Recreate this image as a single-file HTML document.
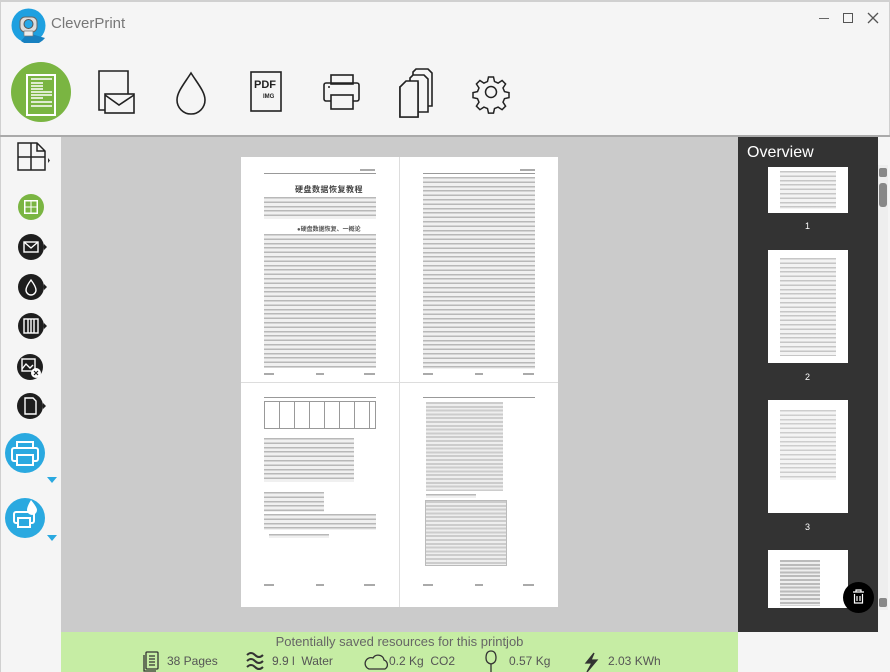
<!DOCTYPE html>
<html><head><meta charset="utf-8"><style>
*{margin:0;padding:0;box-sizing:border-box}
body{width:890px;height:672px;overflow:hidden;background:#f5f5f5;font-family:"Liberation Sans","Noto Sans CJK SC",sans-serif;position:relative}
.a{position:absolute}
.tx{position:absolute;background:repeating-linear-gradient(to bottom,#b8b8b8 0 1.5px,#f0f0f0 1.5px 4.4px)}
.hl{position:absolute;height:1px;background:#999}
.ft{position:absolute;height:2px;background:#aaa}
</style></head><body>
<div class="a" style="left:0;top:0;width:890px;height:2px;background:#d0d0d0"></div>
<div class="a" style="left:0;top:0;width:1px;height:672px;background:#d0d0d0"></div>
<div class="a" style="left:889px;top:0;width:1px;height:136px;background:#d0d0d0"></div>
<svg class="a" style="left:11px;top:8px" width="35" height="35" viewBox="0 0 35 35">
<circle cx="17.5" cy="17.5" r="17" fill="#1ea0e0"/>
<path d="M17 25 L34 30 A17 17 0 0 1 10 33Z" fill="#1780c0"/>
<rect x="9" y="9" width="17" height="15" rx="5" fill="#ddd" stroke="#666"/>
<circle cx="17.5" cy="16" r="4.5" fill="#27a8e8" stroke="#555"/>
<rect x="13" y="23" width="9" height="5" fill="#eee" stroke="#777" stroke-width=".7"/>
</svg>
<div class="a" style="left:51px;top:15px;font-size:15px;color:#777">CleverPrint</div>
<div class="a" style="left:819px;top:18px;width:10px;height:1px;background:#666"></div>
<div class="a" style="left:843px;top:13px;width:10px;height:10px;border:1.3px solid #555"></div>
<svg class="a" style="left:867px;top:12px" width="12" height="12"><path d="M1 1L11 11M11 1L1 11" stroke="#555" stroke-width="1.3"/></svg>
<svg class="a" style="left:0;top:55px" width="530" height="75" viewBox="0 55 530 75">
<circle cx="41" cy="92" r="30" fill="#7ab542"/>
<rect x="27" y="75" width="28" height="40" fill="none" stroke="#fff" stroke-width="2"/>
<g stroke="#fff" stroke-width="1.6"><path d="M31 79H52M31 83H43M31 86H43M31 89H43M31 92H52M31 95H52M31 98H43M31 102H52M31 106H52"/></g>
<g fill="none" stroke="#222" stroke-width="1.6">
<path d="M128 94V71H99V110H105"/><rect x="105" y="94" width="29" height="19"/><path d="M105 95L119 105L134 95"/>
<path d="M191 73C184 84 177 92 177 100A14 14 0 0 0 205 100C205 92 198 84 191 73Z"/>
<rect x="251" y="72" width="30" height="39"/>
<rect x="331" y="75" width="22" height="9"/><rect x="324" y="83" width="35" height="18" rx="2"/><rect x="331" y="95" width="22" height="14" fill="#f5f5f5"/>
<path d="M400 87H406L410 83H418V117H400Z" fill="#f5f5f5"/>
<path d="M410 83V78L413 75H424L428 79V112H418"/><path d="M413 75V72L416 69H428L432 73V106H428"/>
<path d="M400 87L406 81H418V117H400Z" fill="#f5f5f5"/>
</g>
<text x="254" y="88" font-family="Liberation Sans" font-weight="bold" font-size="11" fill="#222">PDF</text>
<text x="263" y="98" font-family="Liberation Sans" font-weight="bold" font-size="6" fill="#222">IMG</text>
<circle cx="329" cy="87" r="1" fill="#222"/>
<g transform="translate(491,92)" fill="none" stroke="#222" stroke-width="1.5">
<path d="M-2.5-15h5l1 4.5 3.6 1.6 4-2.6 3.5 3.5-2.6 4 1.5 3.6 4.5 1v5l-4.5 1-1.5 3.6 2.6 4-3.5 3.5-4-2.6-3.6 1.5-1 4.5h-5l-1-4.5-3.6-1.5-4 2.6-3.5-3.5 2.6-4-1.5-3.6-4.5-1v-5l4.5-1 1.5-3.6-2.6-4 3.5-3.5 4 2.6 3.6-1.6z"/>
<circle r="5.5"/></g>
</svg>
<div class="a" style="left:0;top:135px;width:890px;height:2px;background:#aaa"></div>
<div class="a" style="left:61px;top:137px;width:677px;height:495px;background:#cbcbcb"></div>
<svg class="a" style="left:0;top:137px" width="61" height="420" viewBox="0 137 61 420">
<path d="M18 143H37L45 151V170H18Z M37 143V151H45 M18 157H45 M31 143V170" fill="none" stroke="#222" stroke-width="1.5"/>
<path d="M48 158L50 160.5L48 163Z" fill="#333"/>
<circle cx="31" cy="207" r="13" fill="#7ab542"/>
<rect x="24" y="200" width="14" height="14" fill="#fff"/>
<g fill="#7ab542"><rect x="25.5" y="201.5" width="5" height="5"/><rect x="31.5" y="201.5" width="5" height="5"/><rect x="25.5" y="207.5" width="5" height="5"/><rect x="31.5" y="207.5" width="5" height="5"/></g>
<g fill="#1e1e1e"><circle cx="31" cy="247" r="13"/><circle cx="31" cy="287" r="13"/><circle cx="31" cy="326" r="13"/><circle cx="30" cy="367" r="13"/><circle cx="30" cy="406" r="13"/>
<path d="M44 244L47 247L44 250Z M44 284L47 287L44 290Z M44 323L47 326L44 329Z M43 403L46 406L43 409Z"/></g>
<g fill="none" stroke="#fff" stroke-width="1.4">
<rect x="24" y="242" width="14" height="10"/><path d="M24 242L31 248L38 242"/>
<path d="M31 280C28 284 26 287 26 290A5 5 0 0 0 36 290C36 287 34 284 31 280Z"/>
<rect x="24" y="319" width="14" height="14"/><path d="M28 319V333M31 319V333M34 319V333"/>
<rect x="22" y="359" width="13" height="12"/><path d="M22 369L26 364L30 368L33 365"/>
<path d="M25 398H33L36 401V414H25Z"/></g>
<circle cx="36" cy="373" r="5" fill="#fff"/><path d="M34 371L38 375M38 371L34 375" stroke="#1e1e1e" stroke-width="1.2"/>
<circle cx="25" cy="453" r="20" fill="#2aa9e0"/>
<circle cx="25" cy="518" r="20" fill="#2aa9e0"/>
<g fill="none" stroke="#fff" stroke-width="2"><rect x="17" y="442" width="16" height="6"/><rect x="12" y="448" width="26" height="13" rx="2"/><rect x="17" y="455" width="16" height="10" fill="#2aa9e0"/>
<rect x="14" y="512" width="20" height="11" rx="2"/><rect x="18" y="518" width="12" height="9" fill="#2aa9e0"/></g>
<path d="M31 500C28 505 27 508 27 510A5 5 0 0 0 37 510C37 508 35 505 31 500Z" fill="#fff"/>
<path d="M47 477H57L52 483Z M47 535H57L52 541Z" fill="#2aa9e0"/>
</svg>
<div class="a" style="left:241px;top:157px;width:317px;height:450px;background:#fff"></div>
<div class="a" style="left:399px;top:157px;width:1px;height:450px;background:#ddd"></div>
<div class="a" style="left:241px;top:382px;width:317px;height:1px;background:#ddd"></div>
<div class="hl" style="left:264px;top:173px;width:112px"></div>
<div class="ft" style="left:360px;top:169px;width:15px"></div>
<div class="a" style="left:295px;top:184px;font-size:8px;font-weight:bold;color:#444;letter-spacing:.5px">硬盘数据恢复教程</div>
<div class="tx" style="left:264px;top:197px;width:112px;height:22px"></div>
<div class="a" style="left:297px;top:224px;font-size:6px;font-weight:bold;color:#555">●硬盘数据恢复、一概论</div>
<div class="tx" style="left:264px;top:234px;width:112px;height:134px"></div>
<div class="ft" style="left:264px;top:373px;width:10px"></div><div class="ft" style="left:316px;top:373px;width:8px"></div><div class="ft" style="left:364px;top:373px;width:11px"></div>
<div class="hl" style="left:423px;top:173px;width:112px"></div>
<div class="ft" style="left:520px;top:169px;width:15px"></div>
<div class="tx" style="left:423px;top:177px;width:112px;height:192px"></div>
<div class="ft" style="left:423px;top:373px;width:10px"></div><div class="ft" style="left:475px;top:373px;width:8px"></div><div class="ft" style="left:523px;top:373px;width:11px"></div>
<div class="hl" style="left:264px;top:397px;width:112px"></div>
<div class="a" style="left:264px;top:401px;width:112px;height:28px;border:1px solid #999;background:repeating-linear-gradient(to right,transparent 0 14px,#999 14px 15px)"></div>
<div class="tx" style="left:264px;top:438px;width:90px;height:44px"></div>
<div class="tx" style="left:264px;top:492px;width:60px;height:20px"></div>
<div class="tx" style="left:264px;top:514px;width:112px;height:16px"></div>
<div class="tx" style="left:269px;top:534px;width:60px;height:4px"></div>
<div class="ft" style="left:264px;top:584px;width:10px"></div><div class="ft" style="left:316px;top:584px;width:8px"></div><div class="ft" style="left:364px;top:584px;width:11px"></div>
<div class="hl" style="left:423px;top:397px;width:112px"></div>
<div class="a" style="left:426px;top:402px;width:77px;height:89px;background:repeating-linear-gradient(to bottom,#ccc 0 2px,#eee 2px 3.8px)"></div>
<div class="tx" style="left:426px;top:494px;width:50px;height:4px"></div>
<div class="a" style="left:425px;top:500px;width:82px;height:66px;border:1px solid #bbb;background:repeating-linear-gradient(to bottom,#ccc 0 2px,#eee 2px 3.8px)"></div>
<div class="ft" style="left:423px;top:584px;width:10px"></div><div class="ft" style="left:475px;top:584px;width:8px"></div><div class="ft" style="left:523px;top:584px;width:11px"></div>
<div class="a" style="left:738px;top:137px;width:140px;height:495px;background:#333"></div>
<div class="a" style="left:747px;top:144px;font-size:16px;color:#fff">Overview</div>
<div class="a" style="left:768px;top:167px;width:80px;height:46px;background:#fff"><div class="tx" style="left:12px;top:4px;width:56px;height:38px;opacity:.8"></div></div>
<div class="a" style="left:805px;top:221px;font-size:9px;color:#fff">1</div>
<div class="a" style="left:768px;top:250px;width:80px;height:113px;background:#fff"><div class="tx" style="left:12px;top:8px;width:56px;height:98px;opacity:.8"></div></div>
<div class="a" style="left:805px;top:372px;font-size:9px;color:#fff">2</div>
<div class="a" style="left:768px;top:400px;width:80px;height:113px;background:#fff"><div class="tx" style="left:12px;top:10px;width:56px;height:70px;opacity:.7"></div></div>
<div class="a" style="left:805px;top:522px;font-size:9px;color:#fff">3</div>
<div class="a" style="left:768px;top:550px;width:80px;height:58px;background:#fff"><div class="a" style="left:12px;top:10px;width:40px;height:46px;background:repeating-linear-gradient(to bottom,#bbb 0 2px,#eee 2px 3.8px)"></div></div>
<div class="a" style="left:843px;top:582px;width:31px;height:31px;border-radius:50%;background:#000"></div>
<svg class="a" style="left:851px;top:589px" width="15" height="16"><path d="M2 3H13M5 3V1H10V3M3.5 5V14H11.5V5M6 7V12M9 7V12" fill="none" stroke="#fff" stroke-width="1.2"/></svg>
<div class="a" style="left:878px;top:165px;width:10px;height:445px;background:#eee"></div>
<div class="a" style="left:879px;top:168px;width:8px;height:9px;border-radius:2px;background:#888"></div>
<div class="a" style="left:879px;top:183px;width:8px;height:24px;border-radius:3px;background:#888"></div>
<div class="a" style="left:879px;top:598px;width:8px;height:9px;border-radius:2px;background:#888"></div>
<div class="a" style="left:61px;top:632px;width:677px;height:40px;background:#c6eda4"></div>
<div class="a" style="left:61px;top:634px;width:677px;text-align:center;font-size:13px;color:#666">Potentially saved resources for this printjob</div>
<svg class="a" style="left:140px;top:650px" width="520" height="22">
<g fill="none" stroke="#333" stroke-width="1.3">
<rect x="6" y="2" width="12" height="17" rx="1"/><path d="M4 5V21H16M9 6H15M9 9H15M9 12H15M9 15H15"/>
<path d="M107 5Q111 1 115 5T123 5M107 11Q111 7 115 11T123 11M107 17Q111 13 115 17T123 17" stroke-width="2"/>
<path d="M229 19H245A5 5 0 0 0 244 10A6 6 0 0 0 233 8A5 5 0 0 0 229 19Z"/>
<path d="M351 1Q346 1 346 8Q346 13 351 14Q356 13 356 8Q356 1 351 1ZM351 14V22"/>
<path d="M454 3L446 13H452L447 22L457 10H451Z" fill="#333"/>
</g></svg>
<div class="a" style="left:167px;top:654px;font-size:12px;color:#555">38 Pages</div>
<div class="a" style="left:272px;top:654px;font-size:12px;color:#555">9.9 l&nbsp; Water</div>
<div class="a" style="left:389px;top:654px;font-size:12px;color:#555">0.2 Kg&nbsp; CO2</div>
<div class="a" style="left:509px;top:654px;font-size:12px;color:#555">0.57 Kg</div>
<div class="a" style="left:608px;top:654px;font-size:12px;color:#555">2.03 KWh</div>
</body></html>
